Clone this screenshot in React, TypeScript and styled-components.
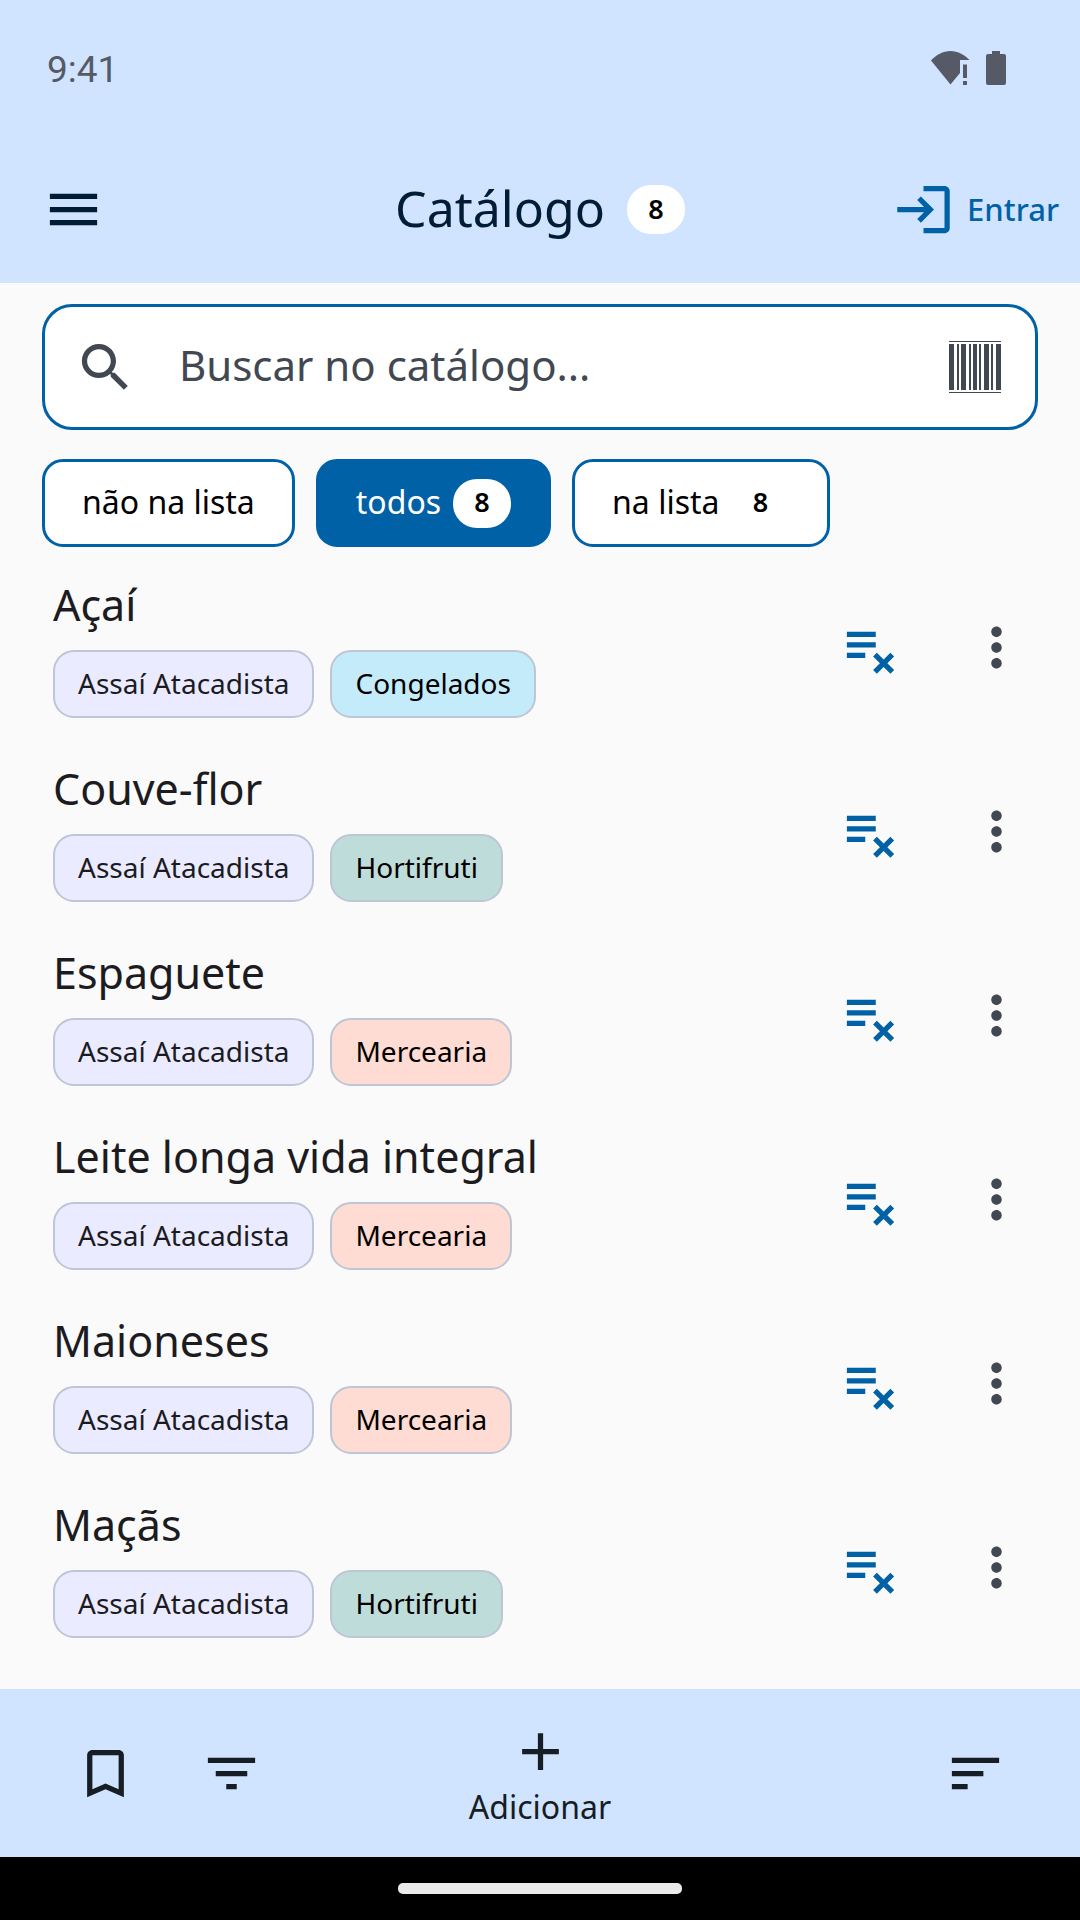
import React, { useState } from "react";
import styled, { createGlobalStyle } from "styled-components";

const color = {
  primary: "#0061a6",
  container: "#d0e4ff",
  onContainer: "#001d34",
  surface: "#fafafa",
  text: "#1c1b1f",
  muted: "#424852",
  nav: "#161d24",
  outline: "#bec6d6",
  store: "#ebebff",
};

const GlobalStyle = createGlobalStyle`
  *, *::before, *::after { box-sizing: border-box; }
  body {
    margin: 0;
    background: ${color.surface};
    color: ${color.text};
    font-family: "Noto Sans", "Open Sans", sans-serif;
  }
  button, input { font: inherit; color: inherit; }
  button { cursor: pointer; }
`;

const Screen = styled.div`
  display: flex;
  flex-direction: column;
  min-height: 100vh;
`;

const StatusBar = styled.div`
  display: flex;
  align-items: center;
  justify-content: space-between;
  height: 136px;
  padding: 0 74px 0 47px;
  background: ${color.container};
  color: #555a66;
`;

const Clock = styled.time`
  font-family: Roboto, sans-serif;
  font-size: 37px;
  line-height: 48px;
  padding-top: 4px;
`;

const StatusIcons = styled.div`
  display: flex;
  align-items: center;
  gap: 16px;
`;

const AppBar = styled.header`
  display: grid;
  grid-template-columns: 1fr auto 1fr;
  align-items: center;
  height: 147px;
  padding: 0 21px;
  background: ${color.container};
  color: ${color.onContainer};
`;

const IconButton = styled.button<{ $tone?: string }>`
  display: flex;
  align-items: center;
  justify-content: center;
  width: 126px;
  height: 126px;
  padding: 0;
  border: 0;
  background: none;
  color: ${(p) => p.$tone ?? "inherit"};
`;

const MenuButton = styled(IconButton)`
  justify-content: flex-start;
  padding-left: 21px;
`;

const TitleGroup = styled.div`
  display: flex;
  align-items: center;
  gap: 22px;
`;

const Title = styled.h1`
  margin: 0;
  padding-bottom: 4px;
  font-size: 50px;
  font-weight: 400;
  line-height: 72px;
`;

const Badge = styled.span`
  display: flex;
  align-items: center;
  justify-content: center;
  width: 58px;
  height: 49px;
  padding-bottom: 2px;
  border-radius: 24px;
  background: #fff;
  color: #000;
  font-size: 27px;
  font-weight: 600;
  line-height: 48px;
`;

const LoginButton = styled.button`
  display: flex;
  align-items: center;
  justify-self: end;
  gap: 12px;
  padding: 0;
  border: 0;
  background: none;
  color: ${color.primary};
  font-size: 31px;
  font-weight: 500;
  line-height: 48px;
`;

const Label = styled.span`
  padding-bottom: 2px;
`;

const Main = styled.main`
  flex: 1;
  padding-top: 21px;
`;

const SearchBox = styled.div`
  display: flex;
  align-items: center;
  height: 126px;
  margin: 0 42px;
  padding: 0 34px 0 29px;
  border: 3px solid ${color.primary};
  border-radius: 30px;
  background: #fff;
  color: ${color.muted};
`;

const SearchLabel = styled.label`
  display: flex;
`;

const SearchInput = styled.input`
  flex: 1;
  min-width: 0;
  margin-left: 42px;
  padding: 0 0 4px;
  border: 0;
  outline: 0;
  background: none;
  font-size: 42px;
  line-height: 58px;

  &::placeholder { color: ${color.muted}; opacity: 1; }
  &::-webkit-search-cancel-button { display: none; }
`;

const ScanButton = styled.button`
  display: flex;
  padding: 0;
  border: 0;
  background: none;
`;

const Filters = styled.div`
  display: flex;
  gap: 21px;
  padding: 29px 42px 8px;
`;

const FilterChip = styled.button<{ $active: boolean }>`
  display: flex;
  align-items: center;
  gap: 12px;
  height: 88px;
  padding: 0 37px;
  border: 3px solid ${color.primary};
  border-radius: 21px;
  background: ${(p) => (p.$active ? color.primary : "#fff")};
  color: ${(p) => (p.$active ? "#fff" : "#000")};
  font-size: 32px;
  line-height: 48px;
`;

const List = styled.ul`
  margin: 0;
  padding: 0;
  list-style: none;
`;

const Row = styled.li`
  display: flex;
  align-items: center;
  padding: 21px 21px 21px 53px;
`;

const Details = styled.div`
  flex: 1;
  min-width: 0;
`;

const Name = styled.h2`
  margin: 0;
  font-size: 43px;
  font-weight: 400;
  line-height: 58px;
`;

const Tags = styled.div`
  display: flex;
  gap: 16px;
  padding-top: 16px;
`;

const Tag = styled.span<{ $fill: string; $ink: string }>`
  height: 68px;
  padding: 0 23px;
  border: 2px solid ${color.outline};
  border-radius: 21px;
  background: ${(p) => p.$fill};
  color: ${(p) => p.$ink};
  font-size: 28px;
  line-height: 62px;
`;

const BottomBar = styled.nav`
  display: grid;
  grid-template-columns: 1fr auto 1fr;
  align-items: center;
  height: 168px;
  padding: 0 42px;
  background: ${color.container};
  color: ${color.nav};
`;

const NavGroup = styled.div<{ $end?: boolean }>`
  display: flex;
  justify-content: ${(p) => (p.$end ? "flex-end" : "flex-start")};
`;

const AddButton = styled.button`
  display: flex;
  flex-direction: column;
  align-items: center;
  padding: 6px 0 0;
  border: 0;
  background: none;
  font-size: 32px;
  line-height: 48px;
`;

const GestureBar = styled.div`
  display: flex;
  align-items: center;
  justify-content: center;
  height: 63px;
  background: #000;
`;

const GestureHandle = styled.div`
  width: 284px;
  height: 11px;
  border-radius: 5px;
  background: #ebebeb;
`;

const paths = {
  menu: "M3 18h18v-2H3v2zm0-5h18v-2H3v2zm0-7v2h18V6H3z",
  login:
    "M11 7 9.6 8.4l2.6 2.6H2v2h10.2l-2.6 2.6L11 17l5-5-5-5zm9 12h-8v2h8c1.1 0 2-.9 2-2V5c0-1.1-.9-2-2-2h-8v2h8v14z",
  search:
    "M15.5 14h-.79l-.28-.27C15.41 12.59 16 11.11 16 9.5 16 5.91 13.09 3 9.5 3S3 5.91 3 9.5 5.91 16 9.5 16c1.61 0 3.09-.59 4.23-1.57l.27.28v.79l5 4.99L20.49 19l-4.99-5zm-6 0C7.01 14 5 11.99 5 9.5S7.01 5 9.5 5 14 7.01 14 9.5 11.99 14 9.5 14z",
  remove:
    "M14 10H3v2h11v-2zm0-4H3v2h11V6zM3 16h7v-2H3v2zm11.41 6L17 19.41 19.59 22 21 20.59 18.41 18 21 15.41 19.59 14 17 16.59 14.41 14 13 15.41 15.59 18 13 20.59 14.41 22z",
  more: "M12 8c1.1 0 2-.9 2-2s-.9-2-2-2-2 .9-2 2 .9 2 2 2zm0 2c-1.1 0-2 .9-2 2s.9 2 2 2 2-.9 2-2-.9-2-2-2zm0 6c-1.1 0-2 .9-2 2s.9 2 2 2 2-.9 2-2-.9-2-2-2z",
  bookmark:
    "M17 3H7c-1.1 0-2 .9-2 2v16l7-3 7 3V5c0-1.1-.9-2-2-2zm0 15-5-2.18L7 18V5h10v13z",
  filter: "M10 18h4v-2h-4v2zM3 6v2h18V6H3zm3 7h12v-2H6v2z",
  add: "M19 13h-6v6h-2v-6H5v-2h6V5h2v6h6v2z",
  sort: "M3 18h6v-2H3v2zM3 6v2h18V6H3zm0 7h12v-2H3v2z",
};

function Icon({ name }: { name: keyof typeof paths }) {
  return (
    <svg width="63" height="63" viewBox="0 0 24 24" fill="currentColor" aria-hidden="true">
      <path d={paths[name]} />
    </svg>
  );
}

function WifiIcon() {
  return (
    <svg width="39" height="34" viewBox="0 0 39 34" fill="currentColor" aria-hidden="true">
      <path d="M0 9.5C5 4 12 0 19.500 0S34 4 38.500 9H29v13L19.500 33.500z" />
      <path d="M32 13.500h4V27h-4zM32 30h4v4h-4z" />
    </svg>
  );
}

function BatteryIcon() {
  return (
    <svg width="20" height="34" viewBox="0 0 20 34" fill="currentColor" aria-hidden="true">
      <path d="M6 0h8v3h4a2 2 0 0 1 2 2v27a2 2 0 0 1-2 2H2a2 2 0 0 1-2-2V5a2 2 0 0 1 2-2h4z" />
    </svg>
  );
}

function BarcodeIcon() {
  return (
    <svg
      width="52"
      height="52"
      viewBox="0 0 52 52"
      fill="currentColor"
      shapeRendering="crispEdges"
      aria-hidden="true"
    >
      <path d="M0 0h52v1H0zM0 51h52v1H0zM0 3h5v46H0zM8 3h2v46H8zM12 3h5v46h-5zM20 3h2v46h-2zM24 3h4v46h-4zM30 3h2v46h-2zM35 3h5v46h-5zM42 3h2v46h-2zM47 3h5v46h-5z" />
    </svg>
  );
}

const categoryFill: Record<string, string> = {
  Congelados: "#c4ebf9",
  Hortifruti: "#bedcda",
  Mercearia: "#fedbd3",
};

const products = [
  { name: "Açaí", store: "Assaí Atacadista", category: "Congelados" },
  { name: "Couve-flor", store: "Assaí Atacadista", category: "Hortifruti" },
  { name: "Espaguete", store: "Assaí Atacadista", category: "Mercearia" },
  { name: "Leite longa vida integral", store: "Assaí Atacadista", category: "Mercearia" },
  { name: "Maioneses", store: "Assaí Atacadista", category: "Mercearia" },
  { name: "Maçãs", store: "Assaí Atacadista", category: "Hortifruti" },
];

const filters = [
  { label: "não na lista" },
  { label: "todos", count: 8 },
  { label: "na lista", count: 8 },
];

export default function App() {
  const [active, setActive] = useState("todos");

  return (
    <>
      <GlobalStyle />
      <Screen>
        <StatusBar>
          <Clock>9:41</Clock>
          <StatusIcons>
            <WifiIcon />
            <BatteryIcon />
          </StatusIcons>
        </StatusBar>

        <AppBar>
          <MenuButton aria-label="Menu">
            <Icon name="menu" />
          </MenuButton>
          <TitleGroup>
            <Title>Catálogo</Title>
            <Badge>8</Badge>
          </TitleGroup>
          <LoginButton>
            <Icon name="login" />
            <Label>Entrar</Label>
          </LoginButton>
        </AppBar>

        <Main>
          <SearchBox>
            <SearchLabel htmlFor="search" aria-label="Buscar">
              <Icon name="search" />
            </SearchLabel>
            <SearchInput id="search" type="search" placeholder="Buscar no catálogo..." />
            <ScanButton aria-label="Ler código de barras">
              <BarcodeIcon />
            </ScanButton>
          </SearchBox>

          <Filters>
            {filters.map((f) => (
              <FilterChip
                key={f.label}
                $active={f.label === active}
                aria-pressed={f.label === active}
                onClick={() => setActive(f.label)}
              >
                <Label>{f.label}</Label>
                {f.count !== undefined && <Badge>{f.count}</Badge>}
              </FilterChip>
            ))}
          </Filters>

          <List>
            {products.map((p) => (
              <Row key={p.name}>
                <Details>
                  <Name>{p.name}</Name>
                  <Tags>
                    <Tag $fill={color.store} $ink={color.text}>
                      {p.store}
                    </Tag>
                    <Tag $fill={categoryFill[p.category]} $ink="#000">
                      {p.category}
                    </Tag>
                  </Tags>
                </Details>
                <IconButton $tone={color.primary} aria-label={`Remover ${p.name} da lista`}>
                  <Icon name="remove" />
                </IconButton>
                <IconButton $tone={color.muted} aria-label={`Opções de ${p.name}`}>
                  <Icon name="more" />
                </IconButton>
              </Row>
            ))}
          </List>
        </Main>

        <BottomBar>
          <NavGroup>
            <IconButton aria-label="Favoritos">
              <Icon name="bookmark" />
            </IconButton>
            <IconButton aria-label="Filtrar">
              <Icon name="filter" />
            </IconButton>
          </NavGroup>
          <AddButton>
            <Icon name="add" />
            <Label>Adicionar</Label>
          </AddButton>
          <NavGroup $end>
            <IconButton aria-label="Ordenar">
              <Icon name="sort" />
            </IconButton>
          </NavGroup>
        </BottomBar>
        <GestureBar>
          <GestureHandle />
        </GestureBar>
      </Screen>
    </>
  );
}
